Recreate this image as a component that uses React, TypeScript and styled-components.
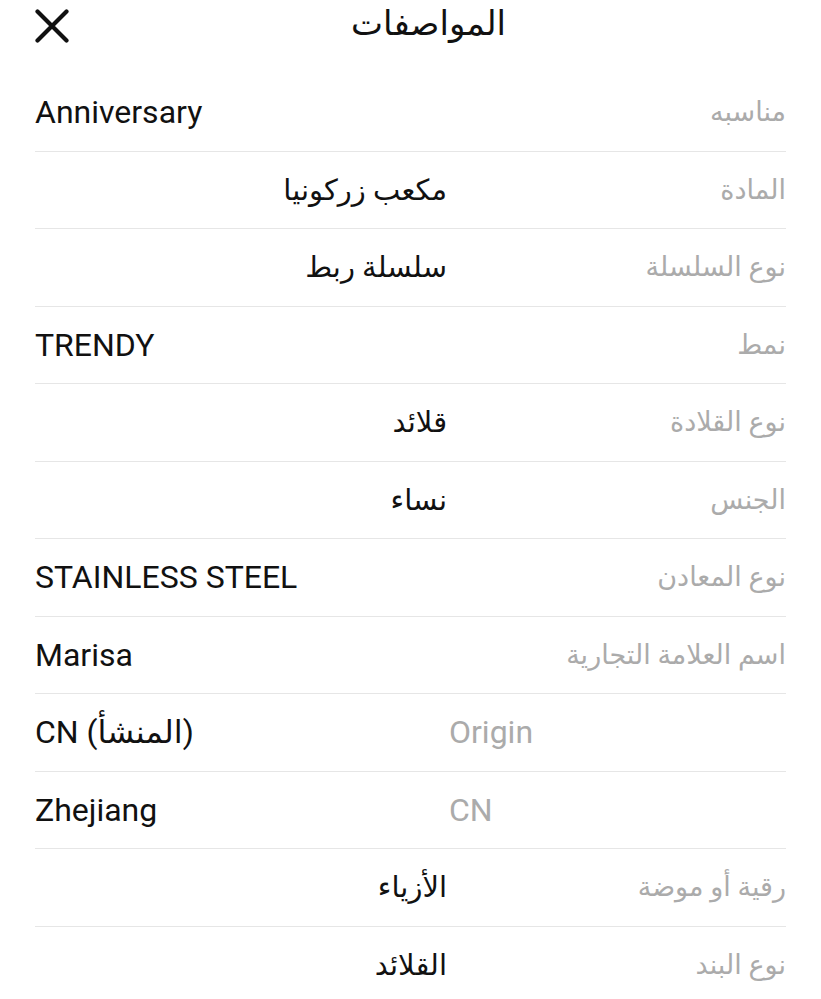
import React from 'react';
import styled, {createGlobalStyle} from 'styled-components';

const GlobalStyle = createGlobalStyle`
	html, body {
		margin: 0;
		padding: 0;
		background: #ffffff;
	}
	body {
		font-family: Roboto, "DejaVu Sans", "Noto Sans", sans-serif;
		-webkit-font-smoothing: antialiased;
	}
`;

const specs: Array<[string, string]> = [
	['مناسبه', 'Anniversary'],
	['المادة', 'مكعب زركونيا'],
	['نوع السلسلة', 'سلسلة ربط'],
	['نمط', 'TRENDY'],
	['نوع القلادة', 'قلائد'],
	['الجنس', 'نساء'],
	['نوع المعادن', 'STAINLESS STEEL'],
	['اسم العلامة التجارية', 'Marisa'],
	['Origin', 'CN (المنشأ)'],
	['CN', 'Zhejiang'],
	['رقية أو موضة', 'الأزياء'],
	['نوع البند', 'القلائد'],
];

// the arabic fallback face runs wider than the latin one, so it gets a smaller size
const startsArabic = (text: string) => /^[\u0600-\u06FF]/.test(text);

const Page = styled.div`
	direction: rtl;
	width: 821px;
	height: 999px;
	overflow: hidden;
	box-sizing: border-box;
	padding: 0 35px;
	background: #fff;
`;

const Header = styled.header`
	position: relative;
	height: 46px;
	display: flex;
	align-items: center;
	justify-content: center;
	margin-bottom: 28px;
`;

const Title = styled.h1`
	margin: 0;
	font-size: 34px;
	font-weight: 400;
	color: #111;
	line-height: 1;
	transform: translateX(18px);
`;

const CloseButton = styled.button`
	position: absolute;
	left: 0;
	top: 9px;
	width: 34px;
	height: 34px;
	padding: 0;
	border: 0;
	background: none;
	cursor: pointer;
	display: flex;
`;

const List = styled.div`
	display: flex;
	flex-direction: column;
`;

const Row = styled.div`
	display: grid;
	grid-template-columns: 337px 1fr;
	column-gap: 2px;
	align-items: center;
	height: 77.5px;
	box-sizing: border-box;
	border-bottom: 1px solid #e6e6e6;

	&:last-child {
		border-bottom: 0;
	}
`;

const Label = styled.div<{$arabic: boolean}>`
	font-size: ${(p) => (p.$arabic ? 27 : 32)}px;
	color: #ababab;
	text-align: start;
	white-space: nowrap;
`;

const Value = styled.div<{$arabic: boolean}>`
	font-size: ${(p) => (p.$arabic ? 29 : 32)}px;
	color: #111;
	text-align: start;
	white-space: nowrap;
`;

const CloseIcon = () => (
	<svg width="34" height="34" viewBox="0 0 34 34">
		<path d="M2.5 2.5 L31.5 31.5 M31.5 2.5 L2.5 31.5" stroke="#111" strokeWidth="4.2" strokeLinecap="round" fill="none" />
	</svg>
);

export default function App() {
	return (
		<>
			<GlobalStyle />
			<Page>
				<Header>
					<Title>المواصفات</Title>
					<CloseButton aria-label="close">
						<CloseIcon />
					</CloseButton>
				</Header>
				<List>
					{specs.map(([label, value]) => (
						<Row key={label}>
							<Label dir="auto" $arabic={startsArabic(label)}>
								{label}
							</Label>
							<Value dir="auto" $arabic={startsArabic(value)}>
								{value}
							</Value>
						</Row>
					))}
				</List>
			</Page>
		</>
	);
}
